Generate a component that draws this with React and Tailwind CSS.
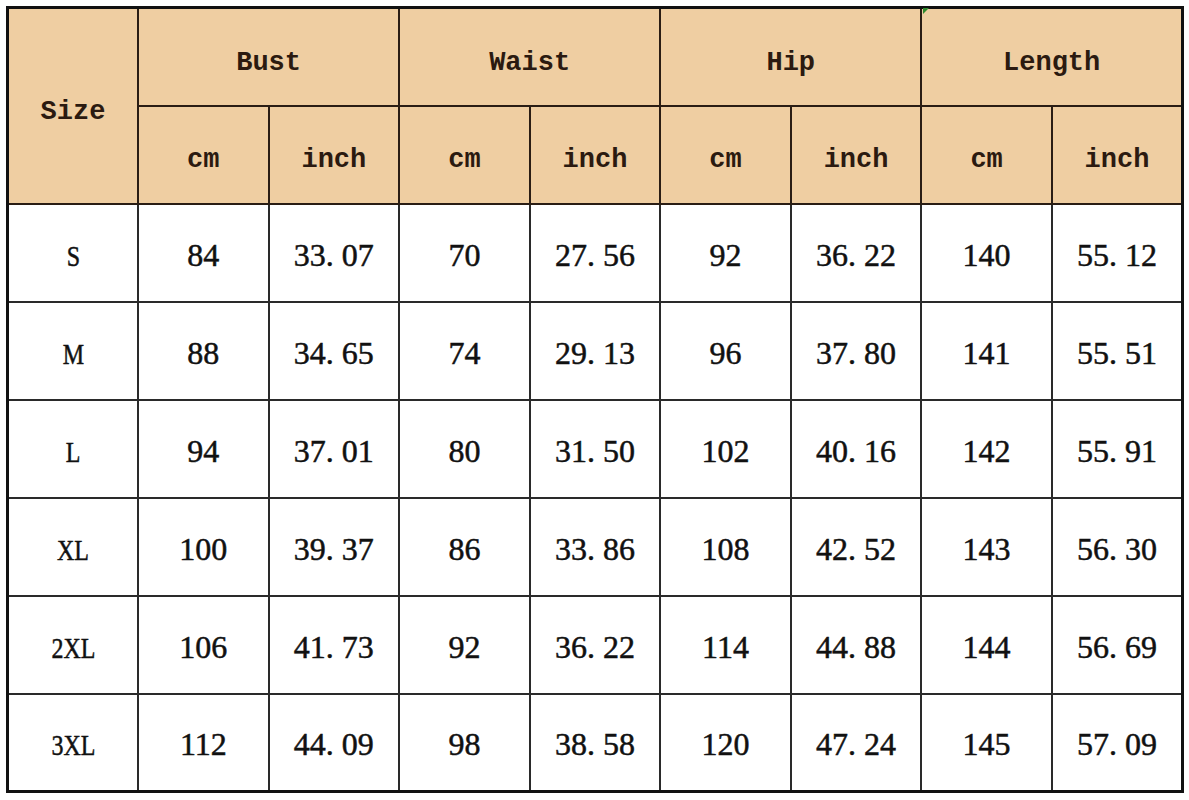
const groups = ['Bust', 'Waist', 'Hip', 'Length']

const rows = [
  ['S', '84', '33. 07', '70', '27. 56', '92', '36. 22', '140', '55. 12'],
  ['M', '88', '34. 65', '74', '29. 13', '96', '37. 80', '141', '55. 51'],
  ['L', '94', '37. 01', '80', '31. 50', '102', '40. 16', '142', '55. 91'],
  ['XL', '100', '39. 37', '86', '33. 86', '108', '42. 52', '143', '56. 30'],
  ['2XL', '106', '41. 73', '92', '36. 22', '114', '44. 88', '144', '56. 69'],
  ['3XL', '112', '44. 09', '98', '38. 58', '120', '47. 24', '145', '57. 09'],
]

const head = "border-2 border-[#2a1d14] bg-[#efcea2] pt-[12px] text-center align-middle font-['Liberation_Mono',monospace] font-bold text-[27px] text-[#2b1a10]"
const cell = "border-2 border-[#2a2a2a] pt-[4px] text-center align-middle font-['Liberation_Serif',serif] text-[32px] text-[#111] [-webkit-text-stroke:0.5px_#111]"

export default function App() {
  return (
    <div className="min-h-[800px] w-[1189px] bg-white pl-[6px] pt-[6px]">
      <div className="relative w-[1178px]">
        <table className="h-[785px] w-[1178px] table-fixed border-collapse border-[3px] border-[#111]">
          <tbody>
            <tr className="h-[98px]">
              <td rowSpan={2} className={head}>Size</td>
              {groups.map((g) => (
                <td key={g} colSpan={2} className={head}>{g}</td>
              ))}
            </tr>
            <tr className="h-[98px]">
              {groups.map((g) => (
                <>
                  <td key={g + 'cm'} className={head}>cm</td>
                  <td key={g + 'in'} className={head}>inch</td>
                </>
              ))}
            </tr>
            {rows.map((r) => (
              <tr key={r[0]} className="h-[98px]">
                {r.map((v, i) => (
                  <td key={i} className={cell}>
                    {i === 0 ? (
                      <span className="inline-block scale-x-[0.8] text-[30px]">{v}</span>
                    ) : (
                      v
                    )}
                  </td>
                ))}
              </tr>
            ))}
          </tbody>
        </table>
        <div className="absolute left-[917px] top-[2px] h-0 w-0 border-r-[6px] border-t-[6px] border-r-transparent border-t-[#2f8a2f]" />
      </div>
    </div>
  )
}
